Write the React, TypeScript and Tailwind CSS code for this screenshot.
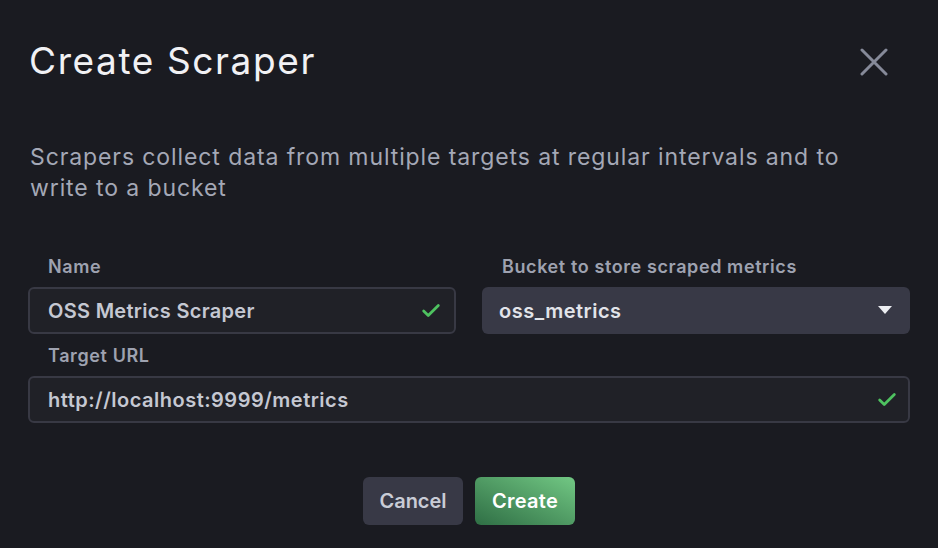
import { Check } from "lucide-react";

export default function App() {
  return (
    <div
      className="w-[938px] h-[548px] bg-[#1a1b21] overflow-hidden"
      style={{ fontFamily: "Inter, 'Noto Sans', sans-serif" }}
    >
      <div className="flex items-center justify-between pl-[29px] pr-[50px] pt-[39px]">
        <h1 className="text-[37px] leading-[44px] font-normal tracking-[1.6px] text-[#f1f1f4]">Create Scraper</h1>
        <svg width="28" height="28" viewBox="0 0 28 28" className="mt-[2px]">
          <path d="M2 2 L26 26 M26 2 L2 26" stroke="#868a99" strokeWidth="3" strokeLinecap="round" />
        </svg>
      </div>

      <p className="mt-[59px] w-[900px] px-[30px] text-[23px] leading-[31px] tracking-[0.9px] text-[#a4a8b6]">
        Scrapers collect data from multiple targets at regular intervals and to
        write to a bucket
      </p>

      <div className="mt-[52px] px-[28px] grid grid-cols-2 gap-x-[26px]">
        <div>
          <div className="pl-[20px] text-[18px] leading-[22px] font-semibold tracking-[0.6px] text-[#9ea2b0]">Name</div>
          <div className="mt-[9px] h-[47px] flex items-center justify-between rounded-[6px] border-2 border-[#383944] bg-[#202127] pl-[18px] pr-[12px]">
            <span className="text-[20px] font-semibold tracking-[0.3px] text-[#c5c8d2]">OSS Metrics Scraper</span>
            <Check size={22} strokeWidth={3} className="text-[#4ec260]" />
          </div>
        </div>
        <div>
          <div className="pl-[20px] text-[18px] leading-[22px] font-semibold tracking-[0.6px] text-[#9ea2b0]">
            Bucket to store scraped metrics
          </div>
          <div className="mt-[9px] h-[47px] flex items-center justify-between rounded-[6px] bg-[#383946] pl-[17px] pr-[18px]">
            <span className="text-[20px] font-semibold tracking-[0.5px] text-[#e2e4ea]">oss_metrics</span>
            <svg width="14" height="9" viewBox="0 0 14 9">
              <path d="M0 0 H14 L7 8 Z" fill="#eceef2" />
            </svg>
          </div>
        </div>
      </div>

      <div className="mt-[11px] px-[28px]">
        <div className="pl-[20px] text-[18px] leading-[22px] font-semibold tracking-[0.6px] text-[#9ea2b0]">Target URL</div>
        <div className="mt-[9px] h-[47px] flex items-center justify-between rounded-[6px] border-2 border-[#383944] bg-[#202127] pl-[18px] pr-[10px]">
          <span className="text-[20px] font-semibold tracking-[0.5px] text-[#c5c8d2]">http://localhost:9999/metrics</span>
          <Check size={22} strokeWidth={3} className="text-[#4ec260]" />
        </div>
      </div>

      <div className="mt-[54px] flex justify-center gap-[12px]">
        <button className="w-[100px] h-[48px] rounded-[6px] bg-[#383946] text-[20px] font-semibold text-[#c9ccd6]">
          Cancel
        </button>
        <button className="w-[100px] h-[48px] rounded-[6px] bg-gradient-to-tr from-[#2f6f45] to-[#72c884] text-[20px] font-semibold tracking-[0.3px] text-white">
          Create
        </button>
      </div>
    </div>
  );
}
